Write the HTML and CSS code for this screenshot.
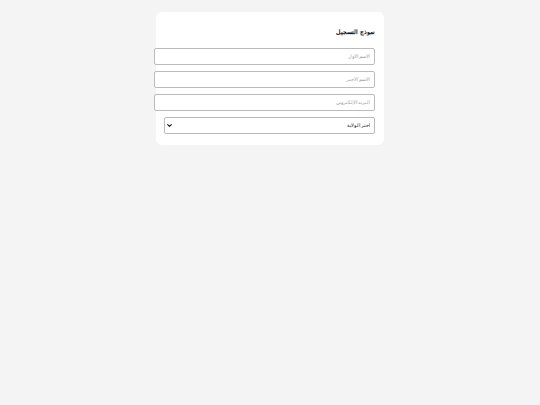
FILE: index.html
```html
<!DOCTYPE html>
<html lang="ar" dir="rtl">
<head>
<meta charset="utf-8">
<title>نموذج التسجيل</title>
<link rel="stylesheet" href="styles.css">
</head>
<body>
<form class="card">
  <h2 class="title">نموذج التسجيل</h2>
  <input class="field" type="text" placeholder="الاسم الأول">
  <input class="field" type="text" placeholder="الاسم الأخير">
  <input class="field" type="email" placeholder="البريد الإلكتروني">
  <div class="select-wrap">
    <select class="field-select">
      <option>اختر الولاية</option>
    </select>
    <svg class="select-arrow" viewBox="0 0 8 5" width="5" height="3" aria-hidden="true">
      <path d="M1 1l3 3 3-3" fill="none" stroke="#111" stroke-width="1.8" stroke-linecap="round" stroke-linejoin="round"/>
    </svg>
  </div>
</form>
</body>
</html>
```

FILE: styles.css
```css
html, body {
  margin: 0;
  padding: 0;
}

body {
  background: #f4f4f4;
  font-family: "Liberation Sans", Arial, sans-serif;
  padding-top: 12px;
}

.card {
  width: 211px;
  margin: 0 auto;
  background: #fff;
  border-radius: 6px;
  padding: 8px 9px 11px 8px;
  display: flex;
  flex-direction: column;
  align-items: flex-start;
}

.title {
  font-size: 6.3px;
  line-height: 10px;
  font-weight: bold;
  margin: 7px 0 11px;
  color: #111;
}

.field {
  width: 100%;
  height: 15px;
  padding: 0 4px;
  margin: 0 0 6px;
  border: 1px solid #bbb;
  border-radius: 2px;
  font-family: "Liberation Sans", Arial, sans-serif;
  font-size: 4.8px;
  background: #fff;
  color: #222;
}

.field::placeholder {
  color: #9a9a9a;
}

.select-wrap {
  position: relative;
  width: 100%;
}

.field-select {
  display: block;
  width: 100%;
  box-sizing: border-box;
  height: 17px;
  padding: 0 4px;
  margin: 0;
  border: 1px solid #bbb;
  border-radius: 2px;
  font-family: "Liberation Sans", Arial, sans-serif;
  font-size: 4.8px;
  background: #fff;
  color: #111;
  appearance: none;
  -webkit-appearance: none;
}

.select-arrow {
  position: absolute;
  left: 3px;
  top: 7px;
  pointer-events: none;
}
```
